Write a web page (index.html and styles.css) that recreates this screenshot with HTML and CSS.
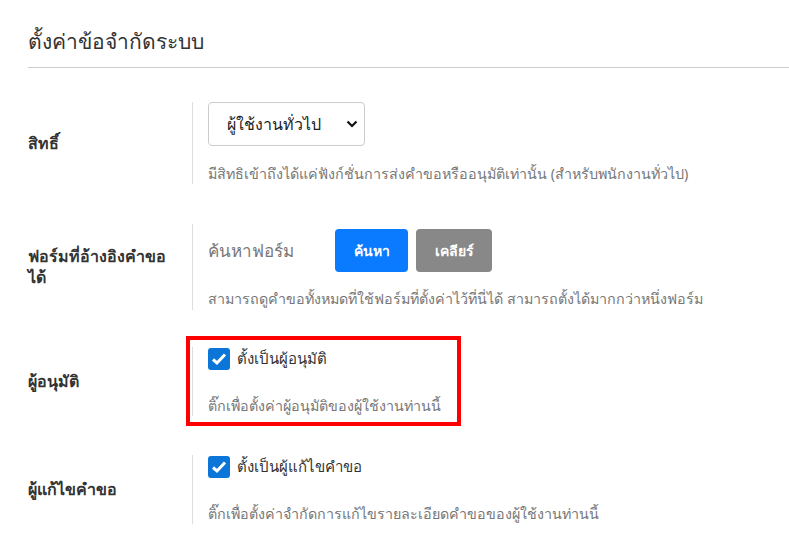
FILE: index.html
```html
<!DOCTYPE html>
<html>
	<head>
		<meta charset="utf-8">
		<title>ตั้งค่าข้อจำกัดระบบ</title>
		<link rel="stylesheet" href="styles.css">
	</head>
	<body>
		<div class="page">
			<h2 class="title">ตั้งค่าข้อจำกัดระบบ</h2>

			<div class="row row-role">
				<div class="label">สิทธิ์</div>
				<div class="field">
					<div class="select-wrap">
						<select class="select">
							<option>ผู้ใช้งานทั่วไป</option>
						</select>
						<svg class="chevron" width="12" height="8" viewBox="0 0 12 8"><path d="M1.5 1.5 L6 6 L10.5 1.5" fill="none" stroke="#111" stroke-width="2.2"/></svg>
					</div>
					<p class="help">มีสิทธิเข้าถึงได้แค่ฟังก์ชั่นการส่งคำขอหรืออนุมัติเท่านั้น (สำหรับพนักงานทั่วไป)</p>
				</div>
			</div>

			<div class="row row-form">
				<div class="label">ฟอร์มที่อ้างอิงคำขอ<br>ได้</div>
				<div class="field">
					<div class="search">
						<span class="search-text">ค้นหาฟอร์ม</span>
						<button class="btn btn-primary">ค้นหา</button>
						<button class="btn btn-gray">เคลียร์</button>
					</div>
					<p class="help">สามารถดูคำขอทั้งหมดที่ใช้ฟอร์มที่ตั้งค่าไว้ที่นี่ได้ สามารถตั้งได้มากกว่าหนึ่งฟอร์ม</p>
				</div>
			</div>

			<div class="row row-check row-approver">
				<div class="label">ผู้อนุมัติ</div>
				<div class="field">
					<label class="check">
						<span class="box"><svg width="16" height="14" viewBox="0 0 16 14"><path d="M2 7.5 L6 11 L14 2.5" fill="none" stroke="#fff" stroke-width="3"/></svg></span>
						ตั้งเป็นผู้อนุมัติ
					</label>
					<p class="help">ติ๊กเพื่อตั้งค่าผู้อนุมัติของผู้ใช้งานท่านนี้</p>
					<div class="highlight"></div>
				</div>
			</div>

			<div class="row row-check">
				<div class="label">ผู้แก้ไขคำขอ</div>
				<div class="field">
					<label class="check">
						<span class="box"><svg width="16" height="14" viewBox="0 0 16 14"><path d="M2 7.5 L6 11 L14 2.5" fill="none" stroke="#fff" stroke-width="3"/></svg></span>
						ตั้งเป็นผู้แก้ไขคำขอ
					</label>
					<p class="help">ติ๊กเพื่อตั้งค่าจำกัดการแก้ไขรายละเอียดคำขอของผู้ใช้งานท่านนี้</p>
				</div>
			</div>

			<div class="row row-check">
				<div class="label">ตั้งค่าอื่นๆ</div>
				<div class="field">
					<p class="help">&nbsp;</p>
				</div>
			</div>
		</div>
	</body>
</html>
```

FILE: styles.css
```css
* {
	margin: 0;
	padding: 0;
	box-sizing: border-box;
}
html, body {
	background: #fff;
}
body {
	font-family: Tahoma, "Noto Sans", "DejaVu Sans", sans-serif;
	color: #333;
	overflow: hidden;
	height: 554px;
}
.page {
	margin-left: 28px;
	padding-top: 26px;
}
.title {
	font-size: 21px;
	font-weight: normal;
	color: #333;
	line-height: 30px;
	padding-bottom: 11px;
	border-bottom: 1px solid #ccc;
	margin-bottom: 34px;
}
.row {
	display: flex;
	align-items: center;
	margin-bottom: 37px;
}
.label {
	width: 164px;
	padding-right: 12px;
	font-size: 16px;
	font-weight: bold;
	line-height: 21px;
	color: #333;
}
.field {
	position: relative;
	border-left: 1px solid #ddd;
	padding-left: 15px;
}
.help {
	font-size: 14.3px;
	line-height: 20px;
	color: #777;
}
.select-wrap {
	position: relative;
	width: 157px;
	height: 44px;
}
.select {
	appearance: none;
	-webkit-appearance: none;
	width: 100%;
	height: 100%;
	border: 1px solid #ccc;
	border-radius: 4px;
	background: #fff;
	font-family: inherit;
	font-size: 16px;
	color: #222;
	padding-left: 18px;
}
.chevron {
	position: absolute;
	right: 7px;
	top: 18px;
}
.row-role {
	margin-bottom: 40px;
}
.row-role .help {
	margin-top: 18px;
}
.search {
	display: flex;
	align-items: center;
	gap: 8px;
	padding-top: 5px;
}
.search-text {
	width: 119px;
	font-size: 17px;
	color: #777;
}
.btn {
	height: 43px;
	border: none;
	border-radius: 4px;
	color: #fff;
	font-family: inherit;
	font-size: 14px;
	font-weight: bold;
}
.btn-primary {
	width: 73px;
	background: #0a7bff;
}
.btn-gray {
	width: 76px;
	background: #888;
}
.row-form .help {
	margin-top: 17px;
	padding-bottom: 1px;
}
.check {
	display: flex;
	align-items: center;
	gap: 7px;
	font-size: 15px;
	color: #333;
	height: 23px;
}
.box {
	width: 22px;
	height: 22px;
	border-radius: 3px;
	background: #0b76d8;
	display: flex;
	align-items: center;
	justify-content: center;
}
.row-check .help {
	margin-top: 26px;
}
.row-approver {
	margin-bottom: 39px;
}
.highlight {
	position: absolute;
	left: -7px;
	top: -11px;
	width: 275px;
	height: 90px;
	border: 4px solid #f00;
}
```
